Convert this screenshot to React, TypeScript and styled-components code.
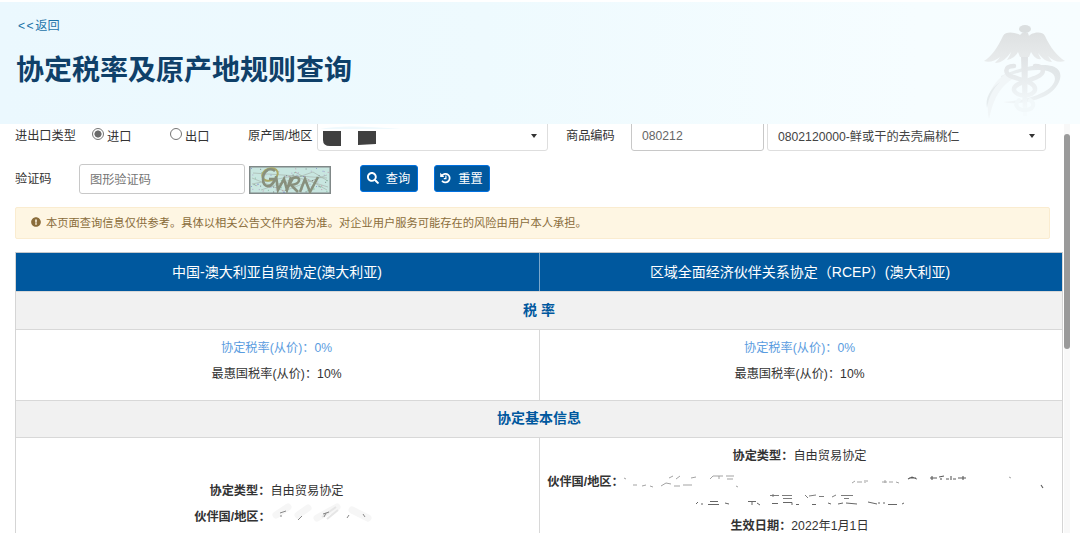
import React from "react";
import styled, { createGlobalStyle } from "styled-components";
import { FaExclamationCircle, FaSearch } from "react-icons/fa";

const Global = createGlobalStyle`
  * { box-sizing: border-box; }
  body {
    margin: 0;
    background: #fff;
    color: #333;
    font-family: "Liberation Sans", "Noto Sans CJK SC", sans-serif;
    font-size: 12.2px;
    overflow: hidden;
  }
`;

const Page = styled.div`
  width: 1080px;
  height: 533px;
  padding-top: 2px;
  display: flex;
  flex-direction: column;
  overflow: hidden;
`;

const Header = styled.header`
  height: 122px;
  flex: none;
  display: flex;
  justify-content: space-between;
  padding: 0 10px 0 17px;
  background: linear-gradient(90deg, #ebf8fe 0%, #eefafe 45%, #f6fdff 85%, #f7fdff 100%);
`;

const Heading = styled.div`
  display: flex;
  flex-direction: column;
  align-items: flex-start;
`;

const Back = styled.a`
  margin: 14px 0 0 1px;
  line-height: 20px;
  height: 20px;
  color: #1c73a8;
  white-space: nowrap;
`;

const Arrows = styled.span`
  letter-spacing: 1.5px;
`;

const Title = styled.h1`
  margin: 15px 0 0 -1px;
  height: 40px;
  line-height: 40px;
  font-size: 28px;
  font-weight: 700;
  color: #0f4069;
  white-space: nowrap;
`;

const Emblem = styled.svg`
  width: 100px;
  height: 122px;
  flex: none;
`;

const Body = styled.main`
  flex: 1;
  min-height: 0;
  display: flex;
  overflow: hidden;
`;

const Content = styled.div`
  width: 1064px;
  flex: none;
  padding-left: 15px;
`;

const ScrollTrack = styled.div`
  width: 6px;
  background: #f8f8f8;
  padding-top: 10px;
`;

const ScrollThumb = styled.div`
  width: 6px;
  height: 215px;
  border-radius: 3px;
  background: #9a9a9a;
`;

const FormRow = styled.div<{ $h: number; $mt?: number }>`
  display: flex;
  align-items: flex-end;
  height: ${(p) => p.$h}px;
  margin-top: ${(p) => p.$mt ?? 0}px;
  overflow: hidden;
`;

const Label = styled.label<{ $w: number; $pl?: number }>`
  width: ${(p) => p.$w}px;
  padding-left: ${(p) => p.$pl ?? 0}px;
  flex: none;
  height: 30px;
  line-height: 30px;
  white-space: nowrap;
`;

const Choice = styled.label<{ $w: number }>`
  display: flex;
  align-items: center;
  gap: 3px;
  width: ${(p) => p.$w}px;
  height: 30px;
  flex: none;
  white-space: nowrap;
`;

const Dot = styled.span<{ $on?: boolean }>`
  width: 12px;
  height: 12px;
  margin-bottom: 4px;
  border-radius: 50%;
  border: 1px solid #757575;
  background: ${(p) => (p.$on ? "radial-gradient(circle, #6b6b6b 0 3.2px, #fff 3.9px)" : "#fff")};
`;

const Field = styled.div<{ $w: number; $ml?: number; $soft?: boolean; $color?: string }>`
  display: flex;
  align-items: center;
  justify-content: space-between;
  width: ${(p) => p.$w}px;
  height: 30px;
  flex: none;
  margin-left: ${(p) => p.$ml ?? 0}px;
  padding: 0 10px;
  border: 1px solid ${(p) => (p.$soft ? "#dedede" : "#c8c8c8")};
  border-radius: 3px;
  color: ${(p) => p.$color ?? "#444"};
  white-space: nowrap;
`;

const Caret = styled.span`
  border: 3.5px solid transparent;
  border-top: 4px solid #333;
  border-bottom: 0;
`;

const Redaction = styled.svg`
  width: 84px;
  height: 28px;
  margin-left: -10px;
`;

const Captcha = styled.svg`
  width: 82px;
  height: 28px;
  margin-left: 4px;
  flex: none;
`;

const Button = styled.button<{ $w: number; $ml: number }>`
  display: flex;
  align-items: center;
  justify-content: center;
  gap: 7px;
  width: ${(p) => p.$w}px;
  height: 27px;
  margin: 0 0 2px ${(p) => p.$ml}px;
  padding: 0 1px 1px 0;
  border: 1px solid #0070e0;
  border-radius: 3px;
  background: #00589e;
  color: #fff;
  font: inherit;
  white-space: nowrap;
`;

const Notice = styled.div`
  display: flex;
  align-items: center;
  gap: 5px;
  width: 1035px;
  height: 32px;
  margin-top: 13px;
  padding: 0 15px 3px;
  border: 1px solid #faecd0;
  border-radius: 2px;
  background: #fef6e3;
  color: #8a6d3b;
  font-size: 11.28px;
  white-space: nowrap;
`;

const Table = styled.section`
  width: 1048px;
  height: 310px;
  margin-top: 13px;
  border: 1px solid #d5d5d5;
  border-top-color: #c4c8cc;
`;

const Pair = styled.div<{ $h: number }>`
  display: grid;
  grid-template-columns: 523px 523px;
  height: ${(p) => p.$h}px;
`;

const HeadCell = styled.div`
  display: flex;
  align-items: center;
  justify-content: center;
  background: #00589e;
  color: #fff;
  font-size: 14px;
  white-space: nowrap;
  padding: 0 1px 3px 0;
  & + & { border-left: 1px solid #7ba8cc; padding-right: 2px; }
`;

const Band = styled.div<{ $h: number }>`
  display: flex;
  align-items: center;
  justify-content: center;
  height: ${(p) => p.$h}px;
  padding-bottom: 4px;
  border: solid #d8d8d8;
  border-width: 1px 0;
  background: #f1f1f1;
  color: #00589e;
  font-size: 14px;
  font-weight: 700;
`;

const Cell = styled.div<{ $pt: number }>`
  display: flex;
  flex-direction: column;
  align-items: center;
  padding: ${(p) => p.$pt}px 2px 0 0;
  min-width: 0;
  & + & { border-left: 1px solid #d8d8d8; padding-right: 3px; }
`;

const Line = styled.div<{ $link?: boolean; $h?: number }>`
  display: flex;
  align-items: center;
  height: ${(p) => p.$h ?? 26}px;
  color: ${(p) => (p.$link ? "#5a9ce0" : "#333")};
  white-space: nowrap;
  flex: none;
`;

const Smudge = styled.svg<{ $w: number; $h: number; $ml?: number; $mr?: number }>`
  width: ${(p) => p.$w}px;
  height: ${(p) => p.$h}px;
  margin-left: ${(p) => p.$ml ?? 0}px;
  margin-right: ${(p) => p.$mr ?? 0}px;
  flex: none;
  overflow: visible;
`;

const speckles = Array.from({ length: 90 }, (_, i) => ({
  x: 2 + ((i * 37.7) % 78),
  y: 2 + ((i * 17.3 + i * i * 0.37) % 24),
  c: ["#5a60c8", "#c05a80", "#4a9a70", "#333", "#a070b8"][i % 5],
}));

function ResetIcon() {
  return (
    <svg width="11" height="12" viewBox="0 0 11 12">
      <path d="M1.9 3.6A4.3 4.3 0 1 1 2 8.8" fill="none" stroke="#fff" strokeWidth="1.8" />
      <path d="M0.2 0.8V5H4.4Z" fill="#fff" />
      <path d="M5.9 3.6V6.6H3.8" fill="none" stroke="#fff" strokeWidth="1.2" />
    </svg>
  );
}

function EmblemMark() {
  return (
    <Emblem viewBox="970 2 100 122">
      <defs>
        <linearGradient id="wing" x1="0" y1="0" x2="0" y2="1">
          <stop offset="0" stopColor="#dee1e2" />
          <stop offset="1" stopColor="#e9eced" />
        </linearGradient>
        <linearGradient id="ring" x1="1" y1="0" x2="0" y2="1">
          <stop offset="0" stopColor="#dfe4e6" />
          <stop offset="1" stopColor="#f2f7f9" />
        </linearGradient>
        <linearGradient id="stem" gradientUnits="userSpaceOnUse" x1="0" y1="55" x2="0" y2="112">
          <stop offset="0" stopColor="#dfe2e4" />
          <stop offset="1" stopColor="#f5fbfd" />
        </linearGradient>
      </defs>
      <path d="M1001 76C1022 66 1042 63 1052 66C1068 71 1059 90 1043 97C1031 102 1017 105 1003 102C1021 101 1036 97 1047 90C1057 83 1057 75 1050 72C1041 68 1020 70 1001 79Z" fill="url(#ring)" />
      <path d="M1007 73C991 83 985 97 989 119C993 103 997 88 1014 78Z" fill="#f1f6f8" />
      <path d="M1000 82C990 89 985 98 987 108C989 96 993 89 1000 82Z" fill="#e6ecee" />
      <path d="M1021 56H1028L1027 116H1023Z" fill="url(#stem)" />
      <path d="M1014 66C1004 66 1004 74 1013 77C1025 81 1036 83 1035 90C1033 97 1016 97 1014 90C1013 83 1029 81 1037 77C1046 73 1044 66 1035 66" fill="none" stroke="url(#stem)" strokeWidth="4.5" strokeLinecap="round" />
      <path d="M1019 100C1013 105 1018 110 1025 110C1033 110 1036 104 1030 100" fill="none" stroke="#f2f8fa" strokeWidth="4" strokeLinecap="round" />
      <path d="M1020 35C1017 33 1006 30 1003 36C998 47 991 57 984 61C989 63 995 61 1000 57C998 60 996 61 995 63C1002 63 1007 58 1011 52C1010 56 1008 58 1007 60C1012 59 1016 56 1018 52L1020 57H1029L1031 52C1034 57 1037 60 1041 59L1038 53C1042 58 1046 62 1052 62L1048 56C1053 61 1059 63 1065 61C1057 56 1050 47 1045 36C1042 30 1031 33 1029 36L1028 33H1022Z" fill="url(#wing)" />
      <ellipse cx="1025" cy="29" rx="6" ry="4" fill="#dbdfe0" />
    </Emblem>
  );
}

function CaptchaImage() {
  return (
    <Captcha viewBox="0 0 82 28">
      <rect x="0.75" y="0.75" width="80.5" height="26.5" fill="#c8e6e0" stroke="#808888" strokeWidth="1.5" />
      <path d="M3 18L44 10L79 21M4 7L78 12M12 24L64 6L79 15M3 12L35 25L78 9M46 6L78 24" fill="none" stroke="#a8b5ad" strokeWidth="0.7" />
      {speckles.map((s, i) => (
        <rect key={i} x={s.x} y={s.y} width="1" height="1" fill={s.c} opacity="0.5" />
      ))}
      <ellipse cx="21" cy="8.5" rx="8" ry="6" fill="none" stroke="#aaa966" strokeWidth="2" transform="rotate(-20 21 8.5)" />
      <path d="M26 5C19 0 14 7 14 13C14 23 23 22 26 13H20M27 10L29 24L35 13L38 24L42 11M37 25L44 12C52 9 53 18 42 19L49 26M51 26L56 13L61 26L69 11" fill="none" stroke="#88907d" strokeWidth="2.6" />
    </Captcha>
  );
}

function LeftRemnant() {
  return (
    <Smudge $w={103} $h={26} $mr={-15} viewBox="265 504 103 26">
      <g fill="none" stroke="#f6f6f6" strokeWidth="7" strokeLinecap="round">
        <path d="M270 516L282 508M292 516L302 509M311 519L331 508M346 511L362 519" />
      </g>
      <path d="M316 518L330 508M321 520L332 511" fill="none" stroke="#e6e6e6" strokeWidth="2" />
      <path d="M274 514L280 512M274 517H276M292 521L296 517M317 515L323 513M318 518L320 514M341 519L343 516M357 515L359 518" fill="none" stroke="#888" strokeWidth="1" />
    </Smudge>
  );
}

function RightRemnantTop() {
  return (
    <Smudge $w={428} $h={26} $ml={-5} $mr={5} viewBox="620 468 428 26">
      <path d="M625 478L627 479M634 485H638M643 486L647 485M651 486L654 487M662 486L667 483L672 484M675 486H681M684 485H693M670 478L674 476M677 479L681 476M692 478L697 477M711 479L714 476H724M720 476V479M727 476H735M728 479H734M737 486L739 487M853 483L856 481M858 482H863M866 480V483M868 482V480M883 482H888M886 480V483M890 482H894M897 482L900 483M1010 477L1012 478" fill="none" stroke="#999" strokeWidth="0.9" />
      <path d="M909 479L913 477L918 479M910 478H917M931 478H938M933 476V480M940 477L945 476M942 478V480M947 479H950M952 476V480M954 479H957M959 478H967M964 476V480M1042 485L1044 488" fill="none" stroke="#5a5a5a" strokeWidth="1.1" />
    </Smudge>
  );
}

function RightRemnantBottom() {
  return (
    <Smudge $w={214} $h={17} viewBox="694 494 214 17">
      <path d="M697 503L699 501M703 502V504M711 500.5H719M709 503.5H720M726 502L730 503M749 500.5H757M753 500V504M758 502L761 504M773 502.5H779M784 501.5H793V504M797 503.5H800M813 503.5H817M829 502L832 503M839 503L844 502M847 502L858 503M869 501L878 503M880 501V503M885 501V503M889 503.5H898M903 503L905 502" fill="none" stroke="#666" strokeWidth="1" />
      <path d="M771 494.5H780M774 493V496M783 494.5H793M784 497.5H793M806 494L809 497M810 495L817 494M820 495.5H825M833 496L837 494M842 494.5H854M845 497.5H850" fill="none" stroke="#6e6e6e" strokeWidth="0.9" />
    </Smudge>
  );
}

function Rates() {
  return (
    <>
      <Line $link>协定税率(从价)：0%</Line>
      <Line>最惠国税率(从价)：10%</Line>
    </>
  );
}

export default function App() {
  return (
    <Page>
      <Global />
      <Header>
        <Heading>
          <Back><Arrows>&lt;&lt;</Arrows>返回</Back>
          <Title>协定税率及原产地规则查询</Title>
        </Heading>
        <EmblemMark />
      </Header>
      <Body>
        <Content>
          <FormRow $h={27}>
            <Label $w={77}>进出口类型</Label>
            <Choice $w={78}><Dot $on />进口</Choice>
            <Choice $w={78}><Dot />出口</Choice>
            <Label $w={69}>原产国/地区</Label>
            <Field $w={231} $soft>
              <Redaction viewBox="0 0 84 28">
                <path d="M5 9H23V24H12Q5 24 5 18ZM40 9H58V22L40 23Z" fill="#404040" />
                <path d="M2 7Q24 2 84 7Z" fill="#eff9fd" />
              </Redaction>
              <Caret />
            </Field>
            <Label $w={83} $pl={18}>商品编码</Label>
            <Field $w={133} $color="#666">080212</Field>
            <Field $w={279} $ml={3} $soft>0802120000-鲜或干的去壳扁桃仁<Caret /></Field>
          </FormRow>
          <FormRow $h={30} $mt={13}>
            <Label $w={64}>验证码</Label>
            <Field $w={166} $color="#757575">图形验证码</Field>
            <CaptchaImage />
            <Button $w={58} $ml={29}><FaSearch size={12} />查询</Button>
            <Button $w={56} $ml={16}><ResetIcon />重置</Button>
          </FormRow>
          <Notice><FaExclamationCircle size={10} />本页面查询信息仅供参考。具体以相关公告文件内容为准。对企业用户服务可能存在的风险由用户本人承担。</Notice>
          <Table>
            <Pair $h={38}>
              <HeadCell>中国-澳大利亚自贸协定(澳大利亚)</HeadCell>
              <HeadCell>区域全面经济伙伴关系协定（RCEP）(澳大利亚)</HeadCell>
            </Pair>
            <Band $h={39}>税 率</Band>
            <Pair $h={70}>
              <Cell $pt={4}><Rates /></Cell>
              <Cell $pt={4}><Rates /></Cell>
            </Pair>
            <Band $h={38}>协定基本信息</Band>
            <Pair $h={124}>
              <Cell $pt={39}>
                <Line><b>协定类型：</b>自由贸易协定</Line>
                <Line><b>伙伴国/地区：</b><LeftRemnant /></Line>
              </Cell>
              <Cell $pt={4}>
                <Line><b>协定类型：</b>自由贸易协定</Line>
                <Line><b>伙伴国/地区：</b><RightRemnantTop /></Line>
                <Line $h={18}><RightRemnantBottom /></Line>
                <Line><b>生效日期：</b>2022年1月1日</Line>
              </Cell>
            </Pair>
          </Table>
        </Content>
        <ScrollTrack><ScrollThumb /></ScrollTrack>
      </Body>
    </Page>
  );
}
